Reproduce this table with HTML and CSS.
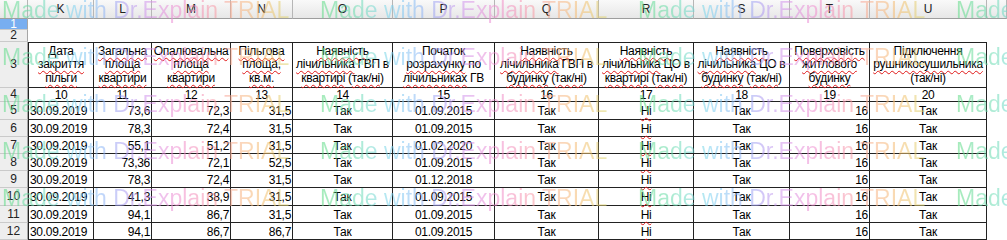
FILE: index.html
```html
<!DOCTYPE html>
<html lang="uk">
<head>
<meta charset="utf-8">
<title>Sheet</title>
<link rel="stylesheet" href="styles.css">
</head>
<body>
<div class="sheet">
  <div class="ch corner"></div>
  <div class="ch">K</div><div class="ch">L</div><div class="ch">M</div><div class="ch">N</div><div class="ch">O</div><div class="ch">P</div><div class="ch">Q</div><div class="ch">R</div><div class="ch">S</div><div class="ch">T</div><div class="ch">U</div><div class="ch"></div>

  <div class="rh sel">1</div>
  <div class="rh">2</div>

  <div class="rh">3</div>
  <div class="c top k hd"><span>Дата<br><u>закриття</u><br><u>пільги</u></span></div>
  <div class="c top hd"><span><u>Загальна</u><br><u>площа</u><br><u>квартири</u></span></div>
  <div class="c top hd"><span><u>Опалювальна</u><br><u>площа</u><br><u>квартири</u></span></div>
  <div class="c top hd"><span><u>Пільгова</u><br><u>площа,</u><br><u>кв.м.</u></span></div>
  <div class="c top hd"><span><u>Наявність</u><br><u>лічильника</u> ГВП в<br><u>квартирі</u> (<u>так/ні</u>)</span></div>
  <div class="c top hd"><span>Початок<br><u>розрахунку</u> по<br><u>лічильниках</u> ГВ</span></div>
  <div class="c top hd"><span><u>Наявність</u><br><u>лічильника</u> ГВП в<br><u>будинку</u> (<u>так/ні</u>)</span></div>
  <div class="c top hd"><span><u>Наявність</u><br><u>лічильника</u> ЦО в<br><u>квартирі</u> (<u>так/ні</u>)</span></div>
  <div class="c top hd"><span><u>Наявність</u><br><u>лічильника</u> ЦО в<br><u>будинку</u> (<u>так/ні</u>)</span></div>
  <div class="c top hd"><span><u>Поверховість</u><br><u>житлового</u><br><u>будинку</u></span></div>
  <div class="c top hd"><span>Підключення<br><u>рушникосушильника</u><br>(так/ні)</span></div>

  <div class="rh">4</div>
  <div class="c k m">10</div><div class="c m">11</div><div class="c m">12</div><div class="c m">13</div><div class="c m">14</div><div class="c m">15</div><div class="c m">16</div><div class="c m">17</div><div class="c m">18</div><div class="c m">19</div><div class="c m">20</div>

  <div class="rh">5</div>
  <div class="c k l">30.09.2019</div><div class="c r">73,6</div><div class="c r">72,3</div><div class="c r">31,5</div><div class="c m">Так</div><div class="c m">01.09.2015</div><div class="c m">Так</div><div class="c m"><u>Ні</u></div><div class="c m">Так</div><div class="c r">16</div><div class="c m">Так</div>

  <div class="rh">6</div>
  <div class="c k l">30.09.2019</div><div class="c r">78,3</div><div class="c r">72,4</div><div class="c r">31,5</div><div class="c m">Так</div><div class="c m">01.09.2015</div><div class="c m">Так</div><div class="c m"><u>Ні</u></div><div class="c m">Так</div><div class="c r">16</div><div class="c m">Так</div>

  <div class="rh">7</div>
  <div class="c k l">30.09.2019</div><div class="c r">55,1</div><div class="c r">51,2</div><div class="c r">31,5</div><div class="c m">Так</div><div class="c m">01.02.2020</div><div class="c m">Так</div><div class="c m"><u>Ні</u></div><div class="c m">Так</div><div class="c r">16</div><div class="c m">Так</div>

  <div class="rh">8</div>
  <div class="c k l">30.09.2019</div><div class="c r">73,36</div><div class="c r">72,1</div><div class="c r">52,5</div><div class="c m">Так</div><div class="c m">01.09.2015</div><div class="c m">Так</div><div class="c m"><u>Ні</u></div><div class="c m">Так</div><div class="c r">16</div><div class="c m">Так</div>

  <div class="rh">9</div>
  <div class="c k l">30.09.2019</div><div class="c r">78,3</div><div class="c r">72,4</div><div class="c r">31,5</div><div class="c m">Так</div><div class="c m">01.12.2018</div><div class="c m">Так</div><div class="c m"><u>Ні</u></div><div class="c m">Так</div><div class="c r">16</div><div class="c m">Так</div>

  <div class="rh">10</div>
  <div class="c k l">30.09.2019</div><div class="c r">41,3</div><div class="c r">38,9</div><div class="c r">31,5</div><div class="c m">Так</div><div class="c m">01.09.2015</div><div class="c m">Так</div><div class="c m"><u>Ні</u></div><div class="c m">Так</div><div class="c r">16</div><div class="c m">Так</div>

  <div class="rh">11</div>
  <div class="c k l">30.09.2019</div><div class="c r">94,1</div><div class="c r">86,7</div><div class="c r">31,5</div><div class="c m">Так</div><div class="c m">01.09.2015</div><div class="c m">Так</div><div class="c m"><u>Ні</u></div><div class="c m">Так</div><div class="c r">16</div><div class="c m">Так</div>

  <div class="rh">12</div>
  <div class="c k l">30.09.2019</div><div class="c r">94,1</div><div class="c r">86,7</div><div class="c r">86,7</div><div class="c m">Так</div><div class="c m">01.09.2015</div><div class="c m">Так</div><div class="c m"><u>Ні</u></div><div class="c m">Так</div><div class="c r">16</div><div class="c m">Так</div>

  <div class="wm" aria-hidden="true">
    <div class="wl"><span>Made with Dr.Explain TRIAL</span><span>Made with Dr.Explain TRIAL</span><span>Made with Dr.Explain TRIAL</span><span>Made with Dr.Explain TRIAL</span></div>
    <div class="wl"><span>Made with Dr.Explain TRIAL</span><span>Made with Dr.Explain TRIAL</span><span>Made with Dr.Explain TRIAL</span><span>Made with Dr.Explain TRIAL</span></div>
    <div class="wl"><span>Made with Dr.Explain TRIAL</span><span>Made with Dr.Explain TRIAL</span><span>Made with Dr.Explain TRIAL</span><span>Made with Dr.Explain TRIAL</span></div>
    <div class="wl"><span>Made with Dr.Explain TRIAL</span><span>Made with Dr.Explain TRIAL</span><span>Made with Dr.Explain TRIAL</span><span>Made with Dr.Explain TRIAL</span></div>
    <div class="wl"><span>Made with Dr.Explain TRIAL</span><span>Made with Dr.Explain TRIAL</span><span>Made with Dr.Explain TRIAL</span><span>Made with Dr.Explain TRIAL</span></div>
  </div>
</div>
</body>
</html>
```

FILE: styles.css
```css
* { box-sizing: border-box; }
html, body { margin: 0; padding: 0; background: #fff; }
body {
  font-family: "Liberation Sans", Arial, sans-serif;
  font-size: 12px;
  letter-spacing: -0.3px;
  color: #000;
  overflow: hidden;
}
.sheet {
  position: relative;
  width: 1007px;
  height: 240px;
  overflow: hidden;
  display: grid;
  grid-template-columns: 28px 66px 58px 79px 62px 100px 102px 104px 95px 96px 80px 117px 20px;
  grid-template-rows: 19px 11px 12px 46px 14px 18px 17px 17px 17px 17px 18px 17px 17px;
}
.ch {
  background: linear-gradient(#f9f9f9, #e7e7e7);
  border-right: 1px solid #b6b6b6;
  border-bottom: 1px solid #9e9e9e;
  display: flex;
  align-items: center;
  justify-content: center;
  font-size: 12px;
  letter-spacing: 0;
  color: #222;
}
.rh {
  grid-column: 1;
  background: #eeeeee;
  border-right: 1px solid #a6a6a6;
  border-bottom: 1px solid #cacaca;
  display: flex;
  align-items: center;
  justify-content: center;
  font-size: 12px;
  letter-spacing: 0;
  line-height: 11px;
  color: #222;
}
.rh.sel { background: #78aef0; color: #fff; }
.c {
  border-right: 1px solid #222;
  border-bottom: 1px solid #222;
  display: flex;
  align-items: center;
  padding: 1px 2px 0 2px;
  white-space: nowrap;
  line-height: 14px;
}
.c.top { border-top: 1px solid #222; }
.c.k { border-left: 1px solid #222; }
.c.l { justify-content: flex-start; padding-left: 1px; }
.c.r { justify-content: flex-end; padding-right: 1px; }
.c.m { justify-content: center; }
.c.hd { justify-content: center; text-align: center; line-height: 13.6px; padding: 0; }
u {
  text-decoration: underline wavy #e01818;
  text-decoration-thickness: 1px;
  text-underline-offset: 2px;
  text-decoration-skip-ink: none;
}
.wm {
  position: absolute;
  left: 2px;
  top: -13px;
  right: 0;
  bottom: 0;
  pointer-events: none;
  font-size: 23px;
  letter-spacing: 0;
  line-height: 47px;
  opacity: 0.55;
}
.wl { display: flex; white-space: nowrap; }
.wl span {
  flex: none;
  width: 318px;
  background: linear-gradient(90deg, #5fdc84 0%, #6edcb8 14%, #7cd4f0 24%, #8cb8f6 34%, #ac9cf2 42%, #d494ec 50%, #f08cd0 60%, #f896a8 72%, #f8b488 81%, #f4c070 90%, #d8dc74 100%);
  background-size: 292px 100%;
  background-repeat: no-repeat;
  -webkit-background-clip: text;
  background-clip: text;
  color: transparent;
}
```
